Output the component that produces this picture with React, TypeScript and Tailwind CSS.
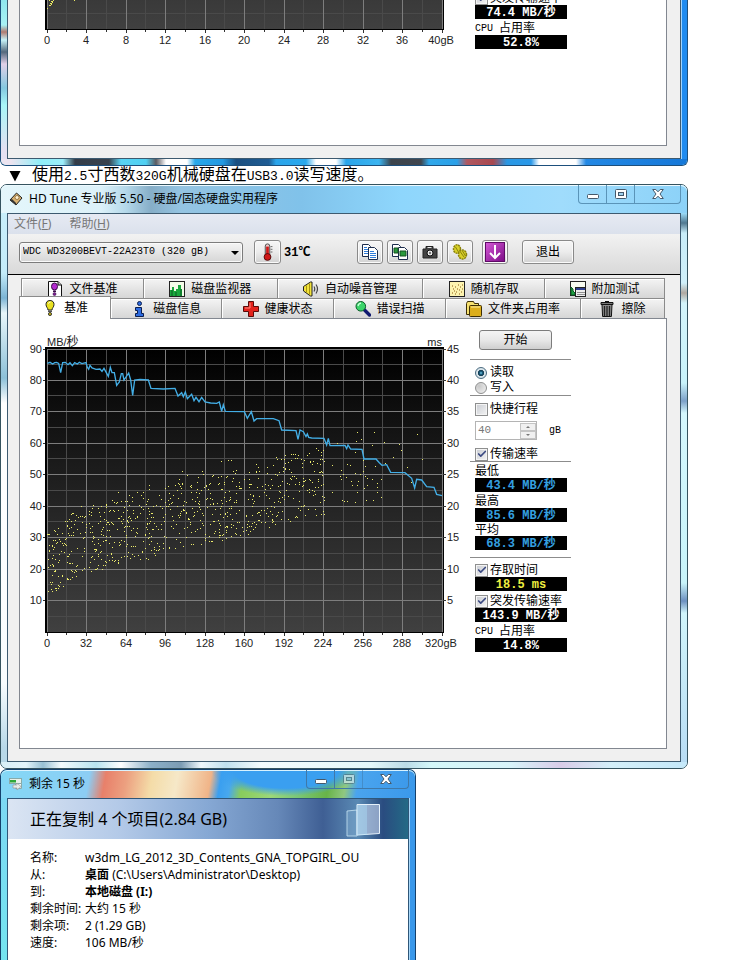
import React from 'react'
import { Check } from 'lucide-react'
import clsx from 'clsx'

const SONG = "font-['Liberation_Mono','Noto_Sans_CJK_SC',monospace]"
const UI = "font-['Noto_Sans','Noto_Sans_CJK_SC',sans-serif]"

const X_MAJOR = [47, 86, 126, 165, 205, 244, 284, 323, 363, 402, 442]
const X_MINOR = [66, 106, 145, 185, 224, 264, 303, 343, 382, 422]
const Y_MAJOR = [349, 380, 411, 443, 474, 506, 537, 569, 600]
const Y_MINOR = [364, 395, 427, 458, 490, 521, 553, 584, 616]

// transfer rate, on a grid three times finer than the plot
const RATE =
  '142,100 150,97 158,102 164,98 170,97 176,100 182,128 188,98 196,97 204,104 210,98 217,107 224,98 232,102 238,97 246,101 258,98 262,112 266,118 270,106 276,114 288,118 300,117 306,124 312,115 325,139 331,112 336,128 343,128 350,166 358,156 364,131 368,131 372,150 386,129 392,150 398,196 404,150 420,148 445,150 453,175 490,177 525,175 534,198 545,188 550,200 556,186 562,206 575,193 582,212 588,202 597,215 605,202 615,216 632,219 650,220 658,216 665,244 670,224 676,244 733,245 742,265 754,245 762,273 770,266 820,266 837,272 845,300 888,302 894,328 900,300 910,305 918,320 922,312 926,322 935,324 972,325 980,345 985,325 990,347 1035,346 1040,356 1044,345 1052,357 1086,358 1092,387 1128,387 1138,398 1146,406 1160,404 1172,427 1215,428 1235,445 1244,474 1250,448 1265,450 1280,470 1302,472 1310,493 1326,497'

// [x, top, bottom] envelope of the access time samples
const ENVELOPE = [
  [142, 600, 800],
  [190, 570, 780],
  [220, 530, 742],
  [300, 520, 722],
  [380, 495, 695],
  [440, 475, 690],
  [500, 450, 660],
  [560, 430, 650],
  [640, 435, 640],
  [740, 410, 615],
  [840, 375, 590],
  [900, 360, 560],
  [975, 350, 555],
]

const SPARSE = [
  [1072, 307], [1122, 307], [1252, 313], [1265, 388], [1198, 343], [1202, 360], [1153, 337], [1116, 346],
  [1068, 334], [1084, 328], [1178, 382], [1222, 412], [1232, 455], [1143, 502], [1144, 447], [1131, 485],
  [1118, 511], [1098, 510], [1064, 517], [1042, 514], [1032, 513], [1070, 487], [1070, 466], [1056, 466],
  [1038, 440], [1051, 405], [1054, 453], [1079, 431], [1095, 439], [1102, 444], [1100, 466], [1092, 474],
  [1130, 458], [1132, 470], [1126, 407], [1096, 407], [1088, 390], [1075, 452], [1090, 422], [1023, 420],
  [1020, 437], [1024, 447], [1026, 511], [990, 345], [1010, 338], [995, 487], [996, 405], [1040, 402],
  [1030, 432], [1115, 446], [1064, 428], [1066, 366], [1156, 400], [547, 424], [606, 424], [664, 394],
  [684, 390], [694, 391], [355, 487], [412, 486], [448, 466],
]

function sampleDots() {
  let seed = 20117
  const next = () => {
    seed = (seed * 16807) % 2147483647
    return seed / 2147483647
  }
  const dots: number[][] = []
  for (let i = 0; i < 780; i++) {
    const x = 142 + Math.pow(next(), 1.15) * 832
    const k = Math.max(1, ENVELOPE.findIndex((p) => p[0] >= x))
    const a = ENVELOPE[k - 1]
    const b = ENVELOPE[k]
    const t = (x - a[0]) / (b[0] - a[0])
    const top = a[1] + (b[1] - a[1]) * t
    const bottom = a[2] + (b[2] - a[2]) * t
    dots.push([x, top + next() * (bottom - top)])
  }
  return dots.concat(SPARSE)
}

const DOTS = sampleDots()

interface ChartProps {
  label: string
  viewBox: string
  className: string
  ticks: string[]
  children?: React.ReactNode
}

function Chart({ label, viewBox, className, ticks, children }: ChartProps) {
  return (
    <svg
      role="img"
      aria-label={label}
      viewBox={viewBox}
      className={clsx("block shrink-0 font-['Liberation_Sans','Noto_Sans_CJK_SC',sans-serif] text-[11px]", className)}
    >
      <defs>
        <linearGradient id="plot" x1="0" y1="0" x2="0" y2="1">
          <stop offset="0" stopColor="#000" />
          <stop offset="0.25" stopColor="#111" />
          <stop offset="1" stopColor="#404040" />
        </linearGradient>
      </defs>
      <rect x="45" y="347" width="399" height="286" fill="#000" />
      <rect x="47" y="349" width="395" height="283" fill="url(#plot)" />
      <g shapeRendering="crispEdges" strokeWidth="1">
        {X_MINOR.map((x) => (
          <path key={x} d={`M${x + 0.5} 349V632`} stroke="#4a4a4a" />
        ))}
        {Y_MINOR.map((y) => (
          <path key={y} d={`M47 ${y + 0.5}H442`} stroke="#4a4a4a" />
        ))}
        {X_MAJOR.map((x) => (
          <path key={x} d={`M${x + 0.5} 349V632`} stroke="#7d7d7d" />
        ))}
        {Y_MAJOR.map((y) => (
          <path key={y} d={`M47 ${y + 0.5}H442`} stroke="#7d7d7d" />
        ))}
        {X_MAJOR.map((x) => (
          <path key={x} d={`M${x + 0.5} 633v3`} stroke="#333" />
        ))}
        {X_MINOR.map((x) => (
          <path key={x} d={`M${x + 0.5} 633v2`} stroke="#333" />
        ))}
        {Y_MAJOR.map((y) => (
          <path key={y} d={`M43 ${y + 0.5}h2M443 ${y + 0.5}h3`} stroke="#333" />
        ))}
      </g>
      {children}
      {ticks.map((t, i) => (
        <text key={t} x={X_MAJOR[i] + (i === 10 ? -1 : 0)} y="647" textAnchor="middle" fill="#222">
          {t}
        </text>
      ))}
    </svg>
  )
}

interface CheckProps {
  id: string
  label: string
  checked?: boolean
  className?: string
}

function CheckRow({ id, label, checked, className }: CheckProps) {
  return (
    <div className={clsx('relative flex h-3.5 shrink-0 items-center gap-0.5 pl-[5px]', className)}>
      <input
        id={id}
        type="checkbox"
        defaultChecked={checked}
        className="peer size-[13px] appearance-none border border-[#8e8f8f] bg-linear-to-br from-[#c9ccd2] to-[#f4f4f4] shadow-[inset_0_0_0_1px_#f4f4f4]"
      />
      <Check
        className="pointer-events-none absolute left-[7px] hidden size-[10px] text-[#3b4a82] peer-checked:block"
        strokeWidth={4}
      />
      <label htmlFor={id} className="whitespace-nowrap pt-0.5">
        {label}
      </label>
    </div>
  )
}

function RadioRow({ id, label, checked }: CheckProps) {
  return (
    <div className="flex h-[15px] items-center gap-[3px] pl-[5px]">
      <input
        id={id}
        name="mode"
        type="radio"
        defaultChecked={checked}
        className="size-3 appearance-none rounded-full border border-[#8e8f8f] bg-[radial-gradient(circle_at_30%_30%,#c8c8c8,#f2f2f2)] checked:border-[#4b6b80] checked:bg-[radial-gradient(circle_at_50%_50%,#7fd4f0_0,#1b5f80_20%,#12384e_40%,#d8e4ea_48%)]"
      />
      <label htmlFor={id}>{label}</label>
    </div>
  )
}

function Readout({ children, className }: { children: React.ReactNode; className: string }) {
  return (
    <output
      className={clsx(
        'ml-[5px] flex h-3.5 w-[92px] shrink-0 items-center justify-center bg-black pt-px font-bold leading-none whitespace-pre',
        className,
      )}
    >
      {children}
    </output>
  )
}

function Label({ children, className }: { children: React.ReactNode; className: string }) {
  return <div className={clsx('flex shrink-0 items-center pt-[3px] pl-[5px] leading-none', className)}>{children}</div>
}

function Rule({ className }: { className?: string }) {
  return <div className={clsx('h-px w-[101px] shrink-0 bg-[#8c8c8c]', className)} />
}

const CAPTION_BUTTON = 'flex items-center justify-center border-r last:border-r-0'

function CaptionButtons({ dimMax, className }: { dimMax?: boolean; className: string }) {
  return (
    <div className={clsx('flex h-[19px] rounded-b-[4px] border border-t-0', className)}>
      <button aria-label="Minimize" className={clsx(CAPTION_BUTTON, 'w-7 border-inherit')}>
        <svg viewBox="0 0 12 12" className="mt-1 size-3">
          <rect x="0.5" y="4.5" width="11" height="4" rx="1" fill="#fff" stroke="#45596b" />
        </svg>
      </button>
      <button aria-label="Maximize" className={clsx(CAPTION_BUTTON, 'w-7 border-inherit', dimMax && 'opacity-50')}>
        <svg viewBox="0 0 12 12" className="size-3">
          <rect x="0.5" y="1.5" width="11" height="9" rx="1" fill="#fff" stroke="#45596b" />
          <rect x="3.5" y="4.5" width="5" height="3" fill="#9fd0ee" stroke="#45596b" />
        </svg>
      </button>
      <button aria-label="Close" className={clsx(CAPTION_BUTTON, 'w-[45px] border-inherit')}>
        <svg viewBox="0 0 12 12" className="size-3">
          <path
            d="M.7 1.5h3.1L6 3.8l2.200-2.300h3.100L8 6l3.300 4.500H8.200L6 8.200 3.800 10.500H.7L4 6z"
            fill="#fff"
            stroke="#45596b"
          />
        </svg>
      </button>
    </div>
  )
}

/* Tab icons */

const ICON = 'size-4 shrink-0'

function FileBenchIcon() {
  return (
    <svg viewBox="0 0 16 16" className={ICON}>
      <path d="M1.500.5H11l3.500 3.500v11.500h-13z" fill="#fff" stroke="#111" />
      <path d="M11 .5V4h3.500" fill="#ccc" stroke="#111" />
      <ellipse cx="7.500" cy="5.500" rx="3" ry="3.500" fill="#b42bd0" stroke="#3a0a48" />
      <path d="M6 9.500h3V11H6z" fill="#3a0a48" />
      <circle cx="7.500" cy="13" r="1.500" fill="#7a1a90" stroke="#3a0a48" strokeWidth=".6" />
    </svg>
  )
}

function MonitorIcon() {
  return (
    <svg viewBox="0 0 16 16" className={ICON}>
      <rect x=".5" y=".5" width="15" height="15" fill="#f4fbe8" stroke="#222" />
      <path d="M1 15V9h2V6h2v4h2V8h2V4h3v4h1v7z" fill="#19a83c" />
      <path d="M3 15V9M7 15v-4M12 15V8" stroke="#0a5a22" />
    </svg>
  )
}

function SpeakerIcon() {
  return (
    <svg viewBox="0 0 16 16" className={ICON}>
      <path d="M.5 5.500L7.500 1h1.500v14H7.500L.5 10z" fill="#f2e33c" stroke="#222" />
      <path d="M6.500 2.500v11M3.500 4.500v7" stroke="#a89410" />
      <path d="M11 5.500q1.500 2.500 0 5M13 3.500q3 4.500 0 9" fill="none" stroke="#444" strokeWidth="1.200" />
    </svg>
  )
}

function RandomIcon() {
  return (
    <svg viewBox="0 0 16 16" className={ICON}>
      <rect x=".5" y=".5" width="15" height="15" fill="#fdf4b0" stroke="#222" />
      <path
        d="M3 12h1M5 10h1M4 8h1M7 11h1M8 8h1M6 6h1M10 9h1M11 6h1M9 4h1M13 4h1M12 11h1M6 13h1M13 8h1M10 13h1M3 5h1"
        stroke="#8a5a14"
      />
    </svg>
  )
}

function ExtraIcon() {
  return (
    <svg viewBox="0 0 16 16" className={ICON}>
      <rect x=".5" y=".5" width="15" height="14" fill="#f8fbf0" stroke="#222" />
      <path d="M1 14V6l2 2v2l2 2v2z" fill="#1fa043" stroke="#0a5a22" />
      <rect x="5.500" y="6.500" width="10" height="9" fill="#eee" stroke="#222" />
      <path d="M6 8h9" stroke="#2c3c8c" strokeWidth="2" />
      <path d="M7.500 11.500h7M7.500 13.500h7" stroke="#333" strokeDasharray="1 1" />
    </svg>
  )
}

function BulbIcon() {
  return (
    <svg viewBox="0 0 16 16" className={ICON}>
      <path d="M8 .5c3 0 4 2 4 4 0 2.500-2 3.500-2 5.500H6C6 8 4 7 4 4.500c0-2 1-4 4-4z" fill="#e8e020" stroke="#222" />
      <path d="M6.500 3.500q.5-1.500 2-1.500" stroke="#fff" fill="none" />
      <path d="M6 10.500h4v1.500H6z" fill="#555" />
      <circle cx="8" cy="14" r="1.600" fill="#b8a818" stroke="#222" strokeWidth=".8" />
    </svg>
  )
}

function InfoIcon() {
  return (
    <svg viewBox="0 0 16 16" className={ICON}>
      <circle cx="8.500" cy="2.500" r="2" fill="#2d6be0" stroke="#0a1e50" />
      <path d="M4.500 6.500h6v6h2v3h-8v-3h2v-3h-2z" fill="#2d6be0" stroke="#0a1e50" />
    </svg>
  )
}

function HealthIcon() {
  return (
    <svg viewBox="0 0 16 16" className={ICON}>
      <path d="M5.500.5h5v5h5v5h-5v5h-5v-5h-5v-5h5z" fill="#e3231c" stroke="#5a0a08" />
      <path d="M7 2v5H2" fill="none" stroke="#ff8a80" />
    </svg>
  )
}

function ScanIcon() {
  return (
    <svg viewBox="0 0 16 16" className={ICON}>
      <path d="M9 8.500l5.500 5.500" stroke="#101a70" strokeWidth="3.400" strokeLinecap="round" />
      <circle cx="5.800" cy="5.300" r="4.800" fill="#3bd46a" stroke="#0c5c28" />
      <path d="M3 5q.5-2.500 3-2.800" stroke="#c8ffd8" fill="none" strokeWidth="1.300" />
    </svg>
  )
}

function FolderIcon() {
  return (
    <svg viewBox="0 0 16 16" className={ICON}>
      <path d="M.5 2.500l1-2h6l1 2h4v11H.5z" fill="#f5e070" stroke="#3c2e05" />
      <rect x="3.500" y="4.500" width="12" height="11" rx="1" fill="#dcae1c" stroke="#3c2e05" />
      <path d="M5 6h9" stroke="#fff0a0" />
    </svg>
  )
}

function TrashIcon() {
  return (
    <svg viewBox="0 0 16 16" className={ICON}>
      <path d="M2 1.500h12v2H2zM6 .5h4" fill="#777" stroke="#111" />
      <path d="M3 3.500h10l-.6 12H3.600z" fill="#8c8c8c" stroke="#111" />
      <path d="M5.500 5v10M8 5v10M10.500 5v10" stroke="#222" strokeWidth="1.300" />
    </svg>
  )
}

const backTabs = [
  { name: '文件基准', icon: FileBenchIcon, width: 'flex-[122]' },
  { name: '磁盘监视器', icon: MonitorIcon, width: 'flex-[134]' },
  { name: '自动噪音管理', icon: SpeakerIcon, width: 'flex-[146]' },
  { name: '随机存取', icon: RandomIcon, width: 'flex-[122]' },
  { name: '附加测试', icon: ExtraIcon, width: 'flex-[120]' },
]

const frontTabs = [
  { name: '磁盘信息', icon: InfoIcon, width: 'flex-[111]' },
  { name: '健康状态', icon: HealthIcon, width: 'flex-[112]' },
  { name: '错误扫描', icon: ScanIcon, width: 'flex-[112]' },
  { name: '文件夹占用率', icon: FolderIcon, width: 'flex-[135]' },
  { name: '擦除', icon: TrashIcon, width: 'flex-[84]' },
]

const TAB =
  'flex h-5 min-w-0 items-center justify-center gap-1.5 whitespace-nowrap border-t border-r border-[#8b8b8b] bg-linear-to-b from-[#f4f4f4] to-[#d6d6d6] shadow-[inset_1px_1px_0_#fff]'

/* Toolbar icons */

function CopyIcon({ shot }: { shot?: boolean }) {
  return (
    <svg viewBox="0 0 16 16" className={ICON}>
      <path d="M.5.500h6l2 2v10h-8z" fill="#fff" stroke="#1c2c4c" />
      <path d="M6.500 3.500h6l3 3v9h-9z" fill="#fff" stroke="#1c2c4c" />
      {shot ? (
        <path d="M2 4h4v5H2zM8 7h6v5H8z" fill="#2a9a3c" stroke="#145020" />
      ) : (
        <path d="M2 3.500h3M2 5.500h4M2 7.500h4M2 9.500h4M8 7.500h4M8 9.500h6M8 11.500h6M8 13.500h6" stroke="#2f7cd8" />
      )}
    </svg>
  )
}

function CameraIcon() {
  return (
    <svg viewBox="0 0 16 16" className={ICON}>
      <path d="M1 5h3V2.500h7V5h4v9H1z" fill="#444" stroke="#222" />
      <path d="M5.500 4V3h4v1z" fill="#e8e8e8" />
      <circle cx="8" cy="9" r="3" fill="#eee" stroke="#111" />
      <circle cx="8" cy="9" r="1.200" fill="#777" />
    </svg>
  )
}

function GearsIcon() {
  return (
    <svg viewBox="0 0 16 16" className={ICON}>
      <ellipse cx="5" cy="5" rx="3.500" ry="4.200" fill="#d8d028" stroke="#8a820e" strokeWidth="1.500" strokeDasharray="2 .7" />
      <ellipse cx="10.500" cy="10.500" rx="4" ry="4.500" fill="#d8d028" stroke="#8a820e" strokeWidth="1.500" strokeDasharray="2 .7" />
      <path d="M3.500 3l3 5M8.500 8l3.500 5M10.500 7l3 5" stroke="#8a820e" />
    </svg>
  )
}

function ArrowDownIcon() {
  return (
    <svg viewBox="0 0 20 20" className="size-5">
      <defs>
        <linearGradient id="purple" x1="0" y1="0" x2="1" y2="1">
          <stop offset="0" stopColor="#d65ad8" />
          <stop offset="1" stopColor="#7c0c86" />
        </linearGradient>
      </defs>
      <rect x=".5" y=".5" width="19" height="19" fill="url(#purple)" stroke="#5e0a66" />
      <path d="M10 3v12.500M5 11l5 5 5-5" fill="none" stroke="#fff" strokeWidth="2" />
    </svg>
  )
}

function ThermometerIcon() {
  return (
    <svg viewBox="0 0 12 20" className="h-[18px] w-[11px]">
      <rect x="3.500" y="1" width="5" height="13" rx="2.500" fill="#e8c8c8" stroke="#444" />
      <path d="M6 4v11" stroke="#d01818" strokeWidth="3" />
      <circle cx="6" cy="15.500" r="3.800" fill="#d01818" stroke="#4a0808" />
      <path d="M9.500 4h2M9.500 7h2M9.500 10h2" stroke="#333" strokeWidth=".8" />
    </svg>
  )
}

const TOOL_BUTTON =
  'flex h-6 shrink-0 items-center justify-center rounded-[3px] border border-[#8a8a8a] bg-linear-to-b from-[#f6f6f6] via-[#ececec] to-[#d2d2d2] shadow-[inset_0_0_0_1px_#fafafa]'

/* Tail of the previous result window */
function PreviousWindow() {
  return (
    <section className="w-full max-w-[688px] rounded-b-[6px] border border-t-0 border-[#1d4f7c] bg-[#b8ecf5]">
      <div className="flex">
        <div className="w-1.5 bg-[linear-gradient(#8fe6ee,#a8f2f4_25px,#b07a70_32px,#c6f2f8_40px,#54687c_52px,#e0d0e8_64px,#84c8e0_88px,#a8f6f8_105px,#e4e0f2_150px)]" />
        <div className="min-w-0 flex-1 border border-t-0 border-[#3d5a70] bg-[#f0f0f0] pr-[13px] pb-3 pl-[11px]">
          <div className="flex items-start gap-2.5 border border-t-0 border-[#828790] bg-white pb-[95px]">
            <Chart
              label="Benchmark 40gB"
              viewBox="20 603 440 50"
              className="h-[50px] w-[440px]"
              ticks={['0', '4', '8', '12', '16', '20', '24', '28', '32', '36', '40gB']}
            >
              <path
                d="M49 603.500h1M51 604.500h2M53 603.500h1M50 606.500h2M52 605.500h1M49 608.500h2M51 607.500h1M47 611.500h1M74 603.500h1"
                stroke="#e8e860"
              />
            </Chart>
            <div className={clsx('flex min-w-0 flex-col text-[12px]', SONG)}>
              <div className="flex h-[5px] items-end overflow-hidden">
                <CheckRow id="burst-prev" label="突发传输速率" checked />
              </div>
              <Readout className="text-white">74.4 MB/秒</Readout>
              <Label className="h-4">
                <span className="text-[10px]">CPU&nbsp;</span>占用率
              </Label>
              <Readout className="text-white">52.8%</Readout>
            </div>
          </div>
        </div>
        <div className="w-1.5 bg-[#1f8bf0] shadow-[inset_1px_0_0_#9fd4ff]" />
      </div>
      <div className="h-1.5 rounded-b-[5px] bg-[linear-gradient(90deg,#ece4f0_10px,#8feef8_40px,#9ceefa_62px,#333c48_74px,#38424e_108px,#58d4f4_120px,#50d0f2_145px,#5a5a60_155px,#fff_165px,#fff_186px,#28a8ea_194px,#2398e0_222px,#1b4f80_235px,#1e5c94_268px,#2aa4ea_275px,#2ba8ec_305px,#fff_315px,#fff_335px,#2aa4ea_345px,#3bb4f0_378px,#3c444c_390px,#40464e_420px,#30a8ea_428px,#2ba0e8_456px,#b05860_466px,#a84850_492px,#2a98e4_506px,#2a98e8_530px,#fff_538px,#fff_575px,#2388e4_585px,#1678d8)]" />
    </section>
  )
}

function HdTuneWindow() {
  return (
    <section className="w-full max-w-[688px] rounded-[7px] border border-[#35535f] bg-[#d4f2fb]">
      <div className="flex h-7 items-start rounded-t-[6px] bg-[linear-gradient(90deg,#e4f6fb,#dcf1f9_100px,#b4d8ea_125px,#86aec8_150px,#94c4e2_180px,#80c2ea_300px,#8ed6fc_400px,#a0dcfc_560px,#8cd2f8)] pr-1.5 pl-2 shadow-[inset_0_1px_0_#eefaff]">
        <div className={clsx('flex h-7 min-w-0 flex-1 items-center gap-1.5 whitespace-nowrap text-[12px] text-black', UI)}>
          <svg viewBox="0 0 14 14" className="size-3.5 shrink-0">
            <path d="M7.500 1L13 6 7 13 1 8z" fill="#d8b070" stroke="#222" />
            <path d="M1 8l6 5v-2L3 7z" fill="#333" />
            <circle cx="8" cy="5.500" r="2" fill="#fff0d0" stroke="#7a5a28" strokeWidth=".7" />
          </svg>
          <h1>HD Tune 专业版 5.50 - 硬盘/固态硬盘实用程序</h1>
        </div>
        <CaptionButtons className="border-[#5a94b8]" />
      </div>

      <div className="flex">
        <div className="w-1.5 bg-[linear-gradient(#c8eefa,#c4ecfa_60px,#7cb4d4_85px,#e8f6fa_100px,#8cc0d8_165px,#fff_190px,#f8fcfe_470px,#b8d8e8_535px)]" />
        <div className="min-w-0 flex-1 border border-[#3d5a70] bg-[#f0f0f0]">
          {/* Menu */}
          <nav
            className={clsx(
              'flex h-5 items-center gap-[18px] bg-linear-to-b from-[#e6eaf3] to-[#dbe1ec] px-1.5 text-[12px] text-[#777]',
              UI,
            )}
          >
            <button>
              文件(<u>F</u>)
            </button>
            <button>
              帮助(<u>H</u>)
            </button>
          </nav>

          {/* Toolbar */}
          <div className={clsx('h-[41px] border-b border-black bg-linear-to-b from-[#f2f2f2] to-[#d9d9d9] px-[11px] pt-1.5 text-[12px]', SONG)}>
            <div className="flex h-6 items-center">
              <div className="relative">
                <select
                  aria-label="Drive"
                  className="block h-[21px] w-56 appearance-none rounded-[3px] border border-[#7c7c7c] bg-linear-to-b from-[#f4f4f4] to-[#d6d6d6] pr-5 pl-[3px] text-[10px] leading-none shadow-[inset_0_0_0_1px_#fafafa]"
                >
                  <option>WDC WD3200BEVT-22A23T0 (320 gB)</option>
                </select>
                <svg viewBox="0 0 8 4" className="pointer-events-none absolute top-[9px] right-1 h-1 w-2">
                  <path d="M0 0h8L4 4z" />
                </svg>
              </div>
              <button aria-label="Temperature" className={clsx(TOOL_BUTTON, 'ml-[11px] w-[27px]')}>
                <ThermometerIcon />
              </button>
              <span className="ml-[3px] w-[73px] pt-px font-bold">31℃</span>
              <div className="flex gap-1">
                <button aria-label="Copy text" className={clsx(TOOL_BUTTON, 'w-[26px]')}>
                  <CopyIcon />
                </button>
                <button aria-label="Copy image" className={clsx(TOOL_BUTTON, 'w-[26px]')}>
                  <CopyIcon shot />
                </button>
                <button aria-label="Save screenshot" className={clsx(TOOL_BUTTON, 'w-[26px]')}>
                  <CameraIcon />
                </button>
                <button aria-label="Options" className={clsx(TOOL_BUTTON, 'w-[26px]')}>
                  <GearsIcon />
                </button>
              </div>
              <button aria-label="Download" className={clsx(TOOL_BUTTON, 'ml-[9px] w-[26px]')}>
                <ArrowDownIcon />
              </button>
              <button className={clsx(TOOL_BUTTON, 'ml-3.5 w-[52px] pt-0.5')}>退出</button>
            </div>
          </div>

          {/* Tabs */}
          <div className={clsx('pt-[3px] pr-[13px] pb-3 pl-[11px] text-[12px]', SONG)}>
            <div className="mx-0.5 flex border-l border-[#8b8b8b]">
              {backTabs.map(({ name, icon: Icon, width }) => (
                <button key={name} className={clsx(TAB, width)}>
                  <Icon />
                  <span className="pt-0.5">{name}</span>
                </button>
              ))}
            </div>
            <div className="mr-0.5 flex">
              <button className="relative z-10 -mt-0.5 -mb-px flex h-[23px] min-w-0 flex-[91] items-center justify-center gap-1.5 whitespace-nowrap border border-b-0 border-[#8b8b8b] bg-white">
                <BulbIcon />
                <span className="pt-0.5">基准</span>
              </button>
              {frontTabs.map(({ name, icon: Icon, width }) => (
                <button key={name} className={clsx(TAB, width)}>
                  <Icon />
                  <span className="pt-0.5">{name}</span>
                </button>
              ))}
            </div>

            <div className="flex items-start gap-2.5 border border-[#828790] bg-white pt-[11px] pb-[94px]">
              <Chart
                label="Benchmark 320gB"
                viewBox="20 330 440 324"
                className="h-[324px] w-[440px]"
                ticks={['0', '32', '64', '96', '128', '160', '192', '224', '256', '288', '320gB']}
              >
                <g fill="#ecec6c" shapeRendering="crispEdges">
                  {DOTS.map(([x, y], i) => (
                    <rect key={i} x={Math.round(x / 3)} y={Math.round(y / 3) + 330} width="1" height="1" />
                  ))}
                </g>
                <g transform="translate(0 330) scale(0.33333)">
                  <polyline points={RATE} fill="none" stroke="#43aee6" strokeWidth="4" />
                </g>
                <g fill="#222">
                  {Y_MAJOR.map((y, i) => (
                    <React.Fragment key={y}>
                      <text x="42" y={y + 4} textAnchor="end">
                        {90 - i * 10}
                      </text>
                      <text x="447" y={y + 4}>
                        {45 - i * 5}
                      </text>
                    </React.Fragment>
                  ))}
                  <text x="47" y="346">
                    MB/<tspan fontSize="12">秒</tspan>
                  </text>
                  <text x="442" y="346" textAnchor="end">
                    ms
                  </text>
                </g>
              </Chart>

              <div className="flex min-w-0 flex-col">
                <button className="ml-[9px] flex h-5 w-[73px] items-center justify-center rounded-[3px] border border-[#7c7c7c] bg-linear-to-b from-[#f4f4f4] via-[#e8e8e8] to-[#cfcfcf] pt-px">
                  开始
                </button>
                <Rule className="mt-[9px] mb-[5px]" />
                <RadioRow id="read" label="读取" checked />
                <RadioRow id="write" label="写入" />
                <Rule className="mb-1.5" />
                <CheckRow id="short" label="快捷行程" />
                <div className="mt-[5px] ml-[5px] flex h-[19px] items-center">
                  <div className="flex h-[19px] w-[62px] items-center border border-[#b4b4b4] bg-white">
                    <input
                      id="stroke"
                      type="text"
                      defaultValue="40"
                      disabled
                      className="w-11 min-w-0 pl-0.5 text-[11px] text-[#777]"
                    />
                    <div className="flex flex-col">
                      <button aria-label="Increase" className="flex h-2 w-4 items-center justify-center border border-[#c4c4c4] bg-[#f0f0f0]">
                        <svg viewBox="0 0 4 2" className="h-0.5 w-1">
                          <path d="M0 2h4L2 0z" fill="#777" />
                        </svg>
                      </button>
                      <button aria-label="Decrease" className="flex h-2 w-4 items-center justify-center border border-[#c4c4c4] bg-[#f0f0f0]">
                        <svg viewBox="0 0 4 2" className="h-0.5 w-1">
                          <path d="M0 0h4L2 2z" fill="#777" />
                        </svg>
                      </button>
                    </div>
                  </div>
                  <label htmlFor="stroke" className="pl-3 text-[10px]">
                    gB
                  </label>
                </div>
                <CheckRow id="rate" label="传输速率" checked className="mt-[7px]" />
                <Rule />
                <Label className="h-4">最低</Label>
                <Readout className="text-[#35a0e0]">43.4 MB/秒</Readout>
                <Label className="h-4">最高</Label>
                <Readout className="text-[#35a0e0]">85.6 MB/秒</Readout>
                <Label className="h-3.5">平均</Label>
                <Readout className="text-[#35a0e0]">68.3 MB/秒</Readout>
                <Rule className="mt-[7px] mb-[5px]" />
                <CheckRow id="access" label="存取时间" checked />
                <Readout className="text-[#f0f040]">18.5 ms</Readout>
                <CheckRow id="burst" label="突发传输速率" checked className="mt-[3px]" />
                <Readout className="text-white">143.9 MB/秒</Readout>
                <Label className="h-4">
                  <span className="text-[10px]">CPU&nbsp;</span>占用率
                </Label>
                <Readout className="text-white">14.8%</Readout>
              </div>
            </div>
          </div>
        </div>
        <div className="w-1.5 bg-[linear-gradient(#9cdcf8,#507890_10px,#c8ecf8_20px,#d0f0fa_70px,#b0a8a0_80px,#d4f4fa_90px,#c8f2fa_170px,#7ca0c8_188px,#d4f6fc_200px,#c8f4fa_370px,#6c90c0_388px,#d0f4fa_400px,#b8dcf4)]" />
      </div>
      <div className="h-1.5 rounded-b-[6px] bg-[linear-gradient(90deg,#d8eef6,#e4f4fa_25px,#98c0d4_42px,#f4fbfd_60px,#b8e4f0_95px,#fff_120px,#8cb0c8_150px,#7c9cb4_180px,#f0f8fc_200px,#c0e0ee_225px,#f4fcfe_260px,#e4f8fa_370px,#bcdce8_405px,#d4f8fa_430px,#d8f4fa_510px,#d8cce8_560px,#d4f0fa_610px,#c4e8fa)]" />
    </section>
  )
}

const details = [
  { term: '名称:', value: 'w3dm_LG_2012_3D_Contents_GNA_TOPGIRL_OU' },
  { term: '从:', strong: '桌面', value: ' (C:\\Users\\Administrator\\Desktop)' },
  { term: '到:', strong: '本地磁盘 (I:)', value: '' },
  { term: '剩余时间:', value: '大约 15 秒' },
  { term: '剩余项:', value: '2 (1.29 GB)' },
  { term: '速度:', value: '106 MB/秒' },
]

function CopyDialog() {
  return (
    <section
      className={clsx('flex w-full max-w-[416px] flex-1 flex-col rounded-t-[7px] border border-b-0 border-[#14406c] bg-[#7ddcf4] text-black', UI)}
    >
      <div className="flex h-7 items-start rounded-t-[6px] bg-[radial-gradient(ellipse_75px_26px_at_285px_0px,#3a9ff0_70%,transparent),linear-gradient(100deg,#84d8f6,#8ccdf4_88px,#e8806a_104px,#eca080_125px,#f4dca8_150px,#f6e8c8_175px,#f0b488_208px,#3a9ff0_218px,#48a8ee_228px,#88cc5c_240px,#9cd878_270px,#7cc878_295px,#68b448_325px,#90c880_342px,#4aa4ee_354px,#3a98ea)] pr-1.5 pl-2 shadow-[inset_0_1px_0_#d8f2ff]">
        <div className="flex h-7 min-w-0 flex-1 items-center gap-1.5 whitespace-nowrap text-[12px]">
          <svg viewBox="0 0 14 14" className="size-3.5 shrink-0">
            <rect x=".5" y="1.500" width="12" height="5" fill="#e8f0e8" stroke="#8aa" />
            <path d="M1 3h6v2.500H1z" fill="#2ea838" />
            <path d="M6.500 6.500h6v5h-6z" fill="#f4f8fa" stroke="#8aa" />
            <path d="M4 8h4V6l4 3.500L8 13v-2H4z" fill="#e8ece8" stroke="#999" strokeWidth=".7" />
          </svg>
          <h2>剩余 15 秒</h2>
        </div>
        <CaptionButtons dimMax className="border-[#3f78a8]" />
      </div>
      <div className="flex flex-1">
        <div className="w-1.5 bg-linear-to-b from-[#7cd8f4] to-[#74e4f0]" />
        <div className="min-w-0 flex-1 border border-b-0 border-[#2f5678] bg-white">
          <header className="flex h-10 items-center justify-between bg-[linear-gradient(90deg,#dbe5f3,#b4cae8_110px,#86a8d4_200px,#6688b8_270px,#3f5f94_315px,#5a8ab4_350px,#2a4c80_375px,#236a86)] pr-6 pl-[22px]">
            <h3 className="whitespace-nowrap text-[16px]">正在复制 4 个项目(2.84 GB)</h3>
            <svg viewBox="0 0 38 36" className="h-9 w-[38px]">
              <path d="M1 10l10-1v26H1z" fill="#9cc8e4" fillOpacity=".3" stroke="#c8e4f4" strokeWidth=".8" />
              <path d="M11 3.500h22.500v29L11 34z" fill="#c8d4ec" fillOpacity=".6" stroke="#e4f0fa" />
              <path d="M11 4h10v30H11z" fill="#a8dcf4" fillOpacity=".45" />
            </svg>
          </header>
          <dl className="grid grid-cols-[55px_1fr] pt-2.5 pl-[22px] text-[12px] leading-[17px]">
            {details.map(({ term, strong, value }) => (
              <React.Fragment key={term}>
                <dt className="whitespace-nowrap">{term}</dt>
                <dd className="whitespace-pre">
                  {strong && <b>{strong}</b>}
                  {value}
                </dd>
              </React.Fragment>
            ))}
          </dl>
        </div>
        <div className="w-1.5 bg-[#3a98ea] shadow-[inset_1px_0_0_#a8d8fa]" />
      </div>
    </section>
  )
}

export default function App() {
  return (
    <main className="flex min-h-screen flex-col bg-white text-black">
      <PreviousWindow />
      <p className={clsx('flex h-[18px] items-center whitespace-pre pt-0.5 pl-[9px] text-[16px] leading-none', SONG)}>
        <svg viewBox="0 0 12 12" className="mr-[11px] size-3">
          <path d="M.5 1h11L6 11.500z" />
        </svg>
        使用<span className="text-[13px]">2.5</span>寸西数<span className="text-[13px]">320G</span>机械硬盘在
        <span className="text-[13px]">USB3.0</span>读写速度。
      </p>
      <HdTuneWindow />
      <CopyDialog />
    </main>
  )
}
